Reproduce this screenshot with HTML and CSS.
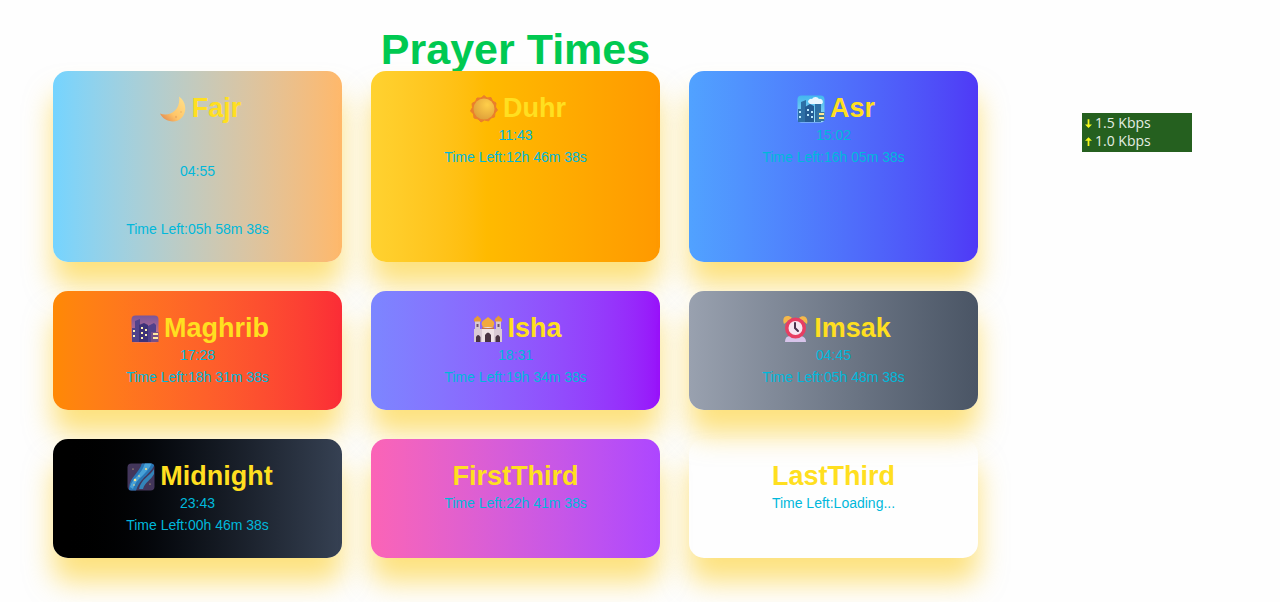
FILE: index.html
```html
<!DOCTYPE html>
<html lang="en">
<head>
<meta charset="utf-8">
<meta name="viewport" content="width=device-width, initial-scale=1">
<title>Prayer Times</title>
<link rel="stylesheet" href="styles.css">
</head>
<body>
<main class="page">
  <h1 class="title">Prayer Times</h1>
  <div class="grid">
    <section class="card card--tall fajr">
      <h2><svg class="icon" viewBox="0 0 28 28" aria-hidden="true"><defs><linearGradient id="moon" x1="1" y1="0" x2="0" y2="1"><stop offset="0" stop-color="#ffe28b"/><stop offset=".6" stop-color="#ffc568"/><stop offset="1" stop-color="#dc7c49"/></linearGradient></defs><path d="M20 1.500C29 8 28 21 19 25.500C12 28 4 25 1 18.500C11 22 22 15 20 1.500Z" fill="url(#moon)"/><circle cx="17" cy="22" r="1.200" fill="#f0b062"/><circle cx="22" cy="17" r="1" fill="#f5bd69"/></svg>Fajr</h2>
      <p>04:55</p>
      <p>Time Left:05h 58m 38s</p>
    </section>
    <section class="card duhr">
      <h2><svg class="icon" viewBox="0 0 28 28" aria-hidden="true"><defs><radialGradient id="sun" cx=".65" cy=".3" r=".75"><stop offset="0" stop-color="#ffcf4a"/><stop offset="1" stop-color="#dfa03a"/></radialGradient></defs><path d="M14 .5L17 3L21 2.500L22.500 6L26 8L25.500 12L27.500 15L25 18L24.500 22L21 23L18.500 26L14.500 25L11 27L8 24L4 23L3.500 19L.5 16L2.500 12.500L2 8.500L5.500 6.500L7 3L11 3Z" fill="#ea7f2c" stroke="#ea7f2c" stroke-linejoin="round"/><circle cx="14" cy="14" r="10.500" fill="url(#sun)"/></svg>Duhr</h2>
      <p>11:43</p>
      <p>Time Left:12h 46m 38s</p>
    </section>
    <section class="card asr">
      <h2><svg class="icon" viewBox="0 0 28 28" aria-hidden="true"><defs><linearGradient id="day" x1="0" y1="0" x2="0" y2="1"><stop offset="0" stop-color="#42b7ee"/><stop offset="1" stop-color="#9bdcf6"/></linearGradient></defs><rect x=".5" y=".5" width="27" height="27" rx="4" fill="url(#day)"/><path d="M11 7a3 3 0 0 1 4-3a4 4 0 0 1 7 0a3 3 0 0 1 3 5H13Z" fill="#e8f6ff"/><path d="M1 14H4V7L9 5V27H1Z" fill="#2d6fa5"/><path d="M18 9H24V27H18Z" fill="#2d6fa5"/><path d="M8 12L13 9L17 11V27H8Z" fill="#235b93"/><path d="M20 17H27.500V26H20Z" fill="#3676a0"/><path d="M2 16h2v2H2zM2 21h2v2H2zM10 14h2v2h-2zM14 16h2v2h-2zM10 19h2v2h-2zM14 21h2v2h-2z" fill="#b8e9ff"/><path d="M22 18h5v2h-5zM22 22h5v2h-5z" fill="#ffe991"/></svg>Asr</h2>
      <p>15:02</p>
      <p>Time Left:16h 05m 38s</p>
    </section>
    <section class="card maghrib">
      <h2><svg class="icon" viewBox="0 0 28 28" aria-hidden="true"><defs><linearGradient id="dusk" x1="0" y1="0" x2="0" y2="1"><stop offset="0" stop-color="#79569a"/><stop offset="1" stop-color="#df7c8d"/></linearGradient></defs><rect x=".5" y=".5" width="27" height="27" rx="4" fill="url(#dusk)"/><path d="M1 13H4V6L9 4V27H1Z" fill="#51438b"/><path d="M17 11L23 8L25 10V27H17Z" fill="#51418c"/><path d="M8 10L13 8L17 10V27H8Z" fill="#3e3278"/><path d="M20 17H27.500V27H20Z" fill="#765087"/><path d="M2 15h2v2H2zM2 20h2v2H2zM10 12h2v2h-2zM14 14h2v2h-2zM10 17h2v2h-2zM14 19h2v2h-2zM10 22h2v2h-2z" fill="#fff0b3"/><path d="M22 18h5v2h-5zM22 22h5v2h-5z" fill="#ffe7a0"/></svg>Maghrib</h2>
      <p>17:28</p>
      <p>Time Left:18h 31m 38s</p>
    </section>
    <section class="card isha">
      <h2><svg class="icon" viewBox="0 0 28 28" aria-hidden="true"><path d="M1 6H6V27H1ZM22 6H27V27H22Z" fill="#d8c8d2"/><path d="M0 14H28V27H0Z" fill="#d9cad4"/><path d="M8 12H20V27H8Z" fill="#eee2e6"/><path d="M0 6.500C-1 3 2 3 3.500 .5C5 3 8 3 7 6.500ZM21 6.500C20 3 23 3 24.500 .5C26 3 29 3 28 6.500Z" fill="#e69a36"/><path d="M9 12C5 6 11 5 14 2C17 5 23 6 19 12Z" fill="#f2aa3d"/><path d="M8 12Q14 14 20 12V14H8Z" fill="#c17446"/><path d="M11 27V20Q14 15 17 20V27ZM2 27V22Q4 18 6.500 22V27ZM21.500 27V22Q24 18 26 22V27Z" fill="#493442"/><path d="M2.500 9h2v3h-2zM23.500 9h2v3h-2z" fill="#70536a"/></svg>Isha</h2>
      <p>18:31</p>
      <p>Time Left:19h 34m 38s</p>
    </section>
    <section class="card imsak">
      <h2><svg class="icon" viewBox="0 0 28 28" aria-hidden="true"><path d="M4 27Q4 21 9 21H20Q25 22 25 27Z" fill="#d7c4ea"/><path d="M3 9C0 1 7-1 11 3ZM18 3C22-1 28 2 26 9Z" fill="#f5b84a"/><circle cx="14.500" cy="13" r="10.500" fill="#e83e62"/><circle cx="14.500" cy="13" r="7" fill="#f7e6f2"/><path d="M14 8V13L17 16" fill="none" stroke="#4b334f" stroke-width="2" stroke-linecap="round"/></svg>Imsak</h2>
      <p>04:45</p>
      <p>Time Left:05h 48m 38s</p>
    </section>
    <section class="card midnight">
      <h2><svg class="icon" viewBox="0 0 28 28" aria-hidden="true"><defs><clipPath id="tile"><rect x=".5" y=".5" width="27" height="27" rx="4"/></clipPath></defs><g clip-path="url(#tile)"><rect width="28" height="28" fill="#43365b"/><path d="M2 25C3 13 12 11 15 0H28C25 11 13 14 9 28H2Z" fill="#2876b5"/><path d="M3 24C5 15 15 12 18 0H25C20 12 9 15 6 26Z" fill="#48a1d7"/><path d="M12 26C14 16 23 13 27 6V11C24 17 18 19 16 26Z" fill="#3384b9"/></g><g fill="#fbe28b"><circle cx="8" cy="17" r="1.300"/><circle cx="12" cy="13" r=".8"/><circle cx="19" cy="6" r="1"/><circle cx="6" cy="6" r=".6"/><circle cx="23" cy="21" r=".6"/><circle cx="7" cy="22" r=".8"/></g></svg>Midnight</h2>
      <p>23:43</p>
      <p>Time Left:00h 46m 38s</p>
    </section>
    <section class="card first-third">
      <h2>FirstThird</h2>
      <p>Time Left:22h 41m 38s</p>
    </section>
    <section class="card">
      <h2>LastThird</h2>
      <p>Time Left:Loading...</p>
    </section>
  </div>
</main>
<aside class="network" aria-label="Network speed">
  <div class="rate"><svg viewBox="0 0 8 12" aria-hidden="true"><path d="M3 1H5V7H8L4 11L0 7H3Z"/></svg>1.5 Kbps</div>
  <div class="rate"><svg viewBox="0 0 8 12" aria-hidden="true"><path d="M3 11H5V5H8L4 1L0 5H3Z"/></svg>1.0 Kbps</div>
</aside>
</body>
</html>
```
FILE: styles.css
```css
* {
  box-sizing: border-box;
  margin: 0;
}

body {
  background: #fefefe;
  font-family: "Liberation Sans", Arial, sans-serif;
}

.page {
  max-width: 978px;
  padding: 27px 0 44px 53px;
}

.title {
  color: #00c951;
  font-size: 43px;
  line-height: 44px;
  text-align: center;
}

.grid {
  position: relative;
  display: grid;
  grid-template-columns: repeat(3, 1fr);
  gap: 29px;
}

.card {
  min-height: 119px;
  padding: 22px 20px;
  border-radius: 15px;
  box-shadow: 0 24px 28px rgb(253 199 0 / 50%);
  color: #00b8db;
  font-size: 14px;
  line-height: 22px;
  text-align: center;
}

.card h2 {
  display: flex;
  align-items: center;
  justify-content: center;
  color: #ffdf20;
  font-size: 27px;
  line-height: 31px;
}

.card--tall p {
  margin-top: 36px;
}

.icon {
  width: 28px;
  height: 28px;
  margin: 0 5px;
}

.fajr { background: linear-gradient(to right in oklab, #74d4ff, #ffb86a); }
.duhr { background: linear-gradient(to right in oklab, #ffd230, #ffba00 40%, #ff9900); }
.asr { background: linear-gradient(to right in oklab, #51a2ff, #4f39f6); }
.maghrib { background: linear-gradient(to right in oklab, #ff8904, #fb2c36); }
.isha { background: linear-gradient(to right in oklab, #7c86ff, #9810fa); }
.imsak { background: linear-gradient(to right in oklab, #99a1af, #4a5565); }
.midnight { background: linear-gradient(to right in oklab, #000, #364153); }
.first-third { background: linear-gradient(to right in oklab, #fb64b6, #ad46ff); }

.network {
  position: absolute;
  top: 113px;
  right: 88px;
  width: 110px;
  padding: 1px 3px 2px;
  background: #25601f;
  color: #e4eee3;
  font: 14px/18px "Open Sans", "Noto Sans", sans-serif;
}

.rate {
  display: flex;
  align-items: center;
  gap: 3px;
}

.rate svg {
  width: 7px;
  height: 11px;
  fill: #f4f81c;
}
```
